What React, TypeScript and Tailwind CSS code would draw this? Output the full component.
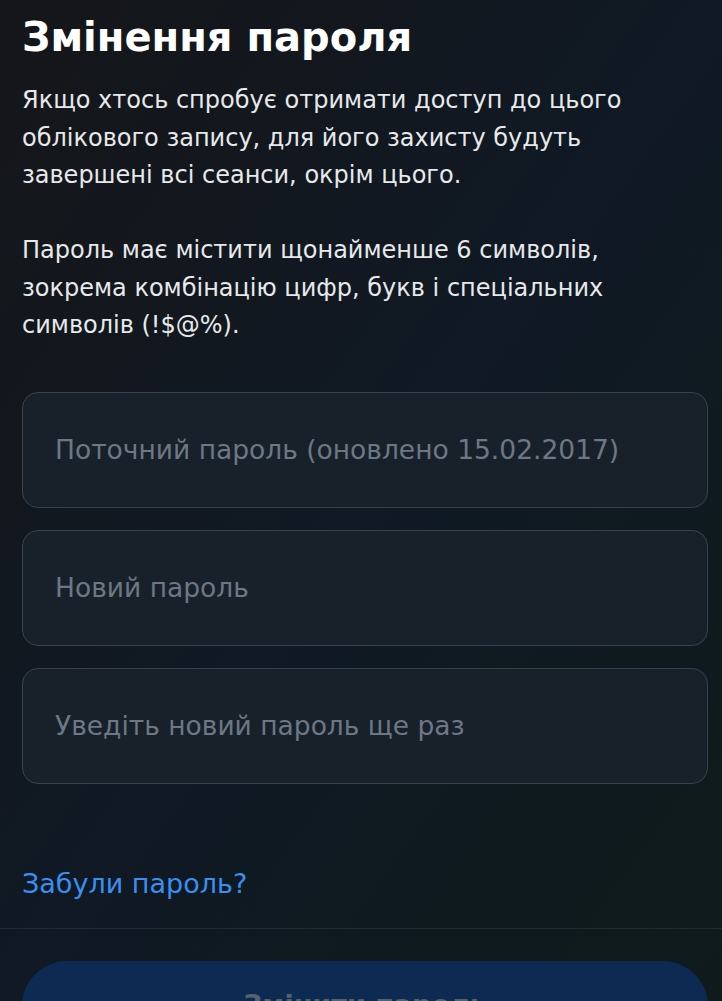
const fields = [
  'Поточний пароль (оновлено 15.02.2017)',
  'Новий пароль',
  'Уведіть новий пароль ще раз',
];

export default function App() {
  return (
    <div
      className="h-[1001px] overflow-hidden bg-linear-to-br from-[#151619] via-[#101924] to-[#0f1b1b] text-white"
      style={{ fontFamily: '"DejaVu Sans", "Noto Sans", sans-serif' }}
    >
      <div className="pl-[22px] pr-[14px] pt-[13px]">
        <h1 className="whitespace-nowrap text-[40px] font-bold leading-[48px]">Змінення пароля</h1>

        <div className="mt-[21px] text-[24px] leading-[37.5px] text-[#e7e9ea]">
          <p>
            Якщо хтось спробує отримати доступ до цього
            <br />
            облікового запису, для його захисту будуть
            <br />
            завершені всі сеанси, окрім цього.
          </p>
          <p className="mt-[37.5px]">
            Пароль має містити щонайменше 6 символів,
            <br />
            зокрема комбінацію цифр, букв і спеціальних
            <br />
            символів (!$@%).
          </p>
        </div>

        <div className="mt-[47px] flex flex-col gap-[22px]">
          {fields.map((label) => (
            <input
              key={label}
              type="password"
              placeholder={label}
              className="h-[116px] w-full rounded-[16px] border border-[#36434e] bg-[#18212a] px-[32px] text-[26.5px] text-white outline-none placeholder:text-[#6c7884]"
            />
          ))}
        </div>

        <a href="#" className="mt-[84px] block w-fit text-[27px] leading-[32px] text-[#3a8ff0]">
          Забули пароль?
        </a>
      </div>

      <div className="mt-[28px] border-t border-[#1d2934]" />

      <div className="pl-[22px] pr-[14px] pt-[32px]">
        <button
          type="button"
          className="h-[90px] w-full rounded-full bg-[#0d2a52] text-[27px] font-bold text-[#56616f]"
        >
          Змінити пароль
        </button>
      </div>
    </div>
  );
}
